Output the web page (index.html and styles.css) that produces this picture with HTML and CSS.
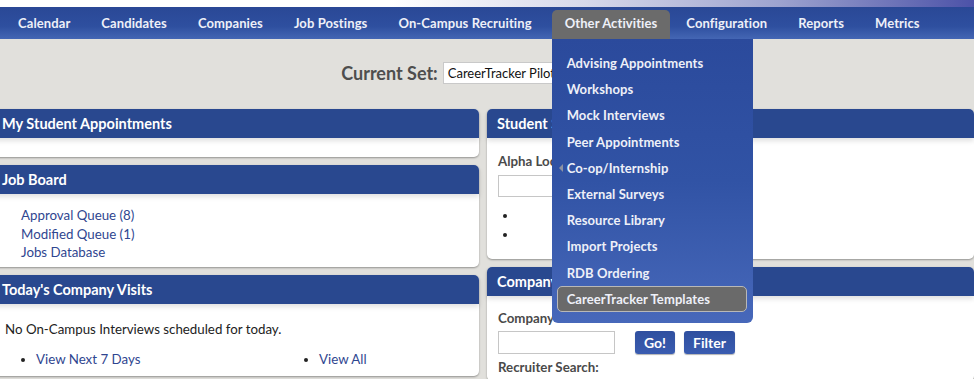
FILE: index.html
```html
<!DOCTYPE html>
<html>
<head>
<meta charset="utf-8">
<link rel="stylesheet" href="styles.css">
</head>
<body>
<div class="topstrip"></div>
<nav class="nav">
  <ul class="menu">
    <li class="menu-item">Calendar</li>
    <li class="menu-item">Candidates</li>
    <li class="menu-item">Companies</li>
    <li class="menu-item">Job Postings</li>
    <li class="menu-item">On-Campus Recruiting</li>
    <li class="menu-item active">Other Activities
      <ul class="dropdown">
        <li class="dd-item">Advising Appointments</li>
        <li class="dd-item">Workshops</li>
        <li class="dd-item">Mock Interviews</li>
        <li class="dd-item">Peer Appointments</li>
        <li class="dd-item has-sub"><span class="sub-arrow"></span>Co-op/Internship</li>
        <li class="dd-item">External Surveys</li>
        <li class="dd-item">Resource Library</li>
        <li class="dd-item">Import Projects</li>
        <li class="dd-item">RDB Ordering</li>
        <li class="dd-item hover">CareerTracker Templates</li>
      </ul>
    </li>
    <li class="menu-item">Configuration</li>
    <li class="menu-item">Reports</li>
    <li class="menu-item">Metrics</li>
  </ul>
</nav>
<main class="main">
  <div class="current-set">
    <span class="cs-label">Current Set:</span>
    <span class="cs-select">CareerTracker Pilot</span>
  </div>
  <div class="columns">
    <div class="col">
      <section class="panel">
        <h2 class="panel-head">My Student Appointments</h2>
        <div class="panel-body empty"></div>
      </section>
      <section class="panel">
        <h2 class="panel-head">Job Board</h2>
        <div class="panel-body links">
          <a class="link">Approval Queue (8)</a>
          <a class="link">Modified Queue (1)</a>
          <a class="link">Jobs Database</a>
        </div>
      </section>
      <section class="panel">
        <h2 class="panel-head">Today's Company Visits</h2>
        <div class="panel-body visits">
          <p class="note">No On-Campus Interviews scheduled for today.</p>
          <div class="two-lists">
            <ul class="blist"><li><a class="link">View Next 7 Days</a></li></ul>
            <ul class="blist"><li><a class="link">View All</a></li></ul>
          </div>
        </div>
      </section>
    </div>
    <div class="col">
      <section class="panel">
        <h2 class="panel-head">Student Search</h2>
        <div class="panel-body form">
          <div class="label">Alpha Lookup:</div>
          <div class="input wide"></div>
          <ul class="blist tight"><li>&nbsp;</li><li>&nbsp;</li></ul>
        </div>
      </section>
      <section class="panel">
        <h2 class="panel-head">Company Search</h2>
        <div class="panel-body form company">
          <div class="label">Company Name:</div>
          <div class="row">
            <div class="input"></div>
            <span class="btn go">Go!</span>
            <span class="btn">Filter</span>
          </div>
          <div class="label">Recruiter Search:</div>
        </div>
      </section>
    </div>
  </div>
</main>
</body>
</html>
```
FILE: styles.css
```css
* { box-sizing: border-box; }
html, body { margin: 0; padding: 0; }
body {
  width: 974px;
  height: 379px;
  overflow: hidden;
  background: #e1e0dc;
  font-family: Lato, "Open Sans", sans-serif;
  font-size: 13px;
  color: #222;
}
.topstrip {
  height: 7px;
  background: linear-gradient(90deg, #ffffff 0%, #ffffff 40%, #d7d9ea 60%, #9da3cf 80%, #4c52a8 100%);
}
.nav {
  height: 32px;
  background: linear-gradient(180deg, #2a4896 0%, #2e4f9f 60%, #4466b4 100%);
  position: relative;
  z-index: 5;
}
.menu {
  list-style: none;
  margin: 0;
  padding: 0 0 0 5px;
  display: flex;
  height: 32px;
}
.menu-item {
  position: relative;
  height: 29px;
  margin-top: 3px;
  margin-right: 5px;
  padding: 5px 13px 0;
  color: #eef0f8;
  font-weight: bold;
  font-size: 13px;
  letter-spacing: 0.1px;
  white-space: nowrap;
}
.menu-item.active {
  background: #6b6b6b;
  border-radius: 5px 5px 0 0;
  margin-left: 2px;
  margin-right: 3px;
}
.dropdown {
  list-style: none;
  position: absolute;
  left: 0;
  top: 29px;
  width: 201px;
  margin: 0;
  padding: 11px 0 11px;
  background: linear-gradient(180deg, #2b4a9c 0%, #3153a5 50%, #4768ba 100%);
  border-radius: 0 0 6px 6px;
}
.dd-item {
  position: relative;
  height: 26.2px;
  line-height: 24px;
  margin: 0 6px 0 5px;
  padding-left: 9px;
  border: 1px solid transparent;
  border-radius: 5px;
  font-size: 13px;
  color: #eef0f8;
}
.dd-item.hover {
  background: #6a6a6a;
  border-color: #b8b8b8;
}
.sub-arrow {
  position: absolute;
  left: 1px;
  top: 8px;
  width: 0;
  height: 0;
  border-top: 4px solid transparent;
  border-bottom: 4px solid transparent;
  border-right: 4px solid #8d92a2;
}
.main { padding-top: 22px; }
.current-set {
  display: flex;
  justify-content: center;
  align-items: center;
  gap: 5px;
  height: 24px;
  padding-left: 2px;
}
.cs-label {
  font-size: 18px;
  font-weight: bold;
  color: #4e4e4e;
}
.cs-select {
  width: 192px;
  height: 22px;
  background: #fff;
  border: 1px solid #c9c9c9;
  font-size: 13px;
  padding: 2px 4px;
  color: #111;
  white-space: nowrap;
  overflow: hidden;
}
.columns {
  margin: 24px 0 0 -8px;
  width: 982px;
  display: grid;
  grid-template-columns: 487px 487px;
  column-gap: 8px;
  align-items: start;
}
.col { display: flex; flex-direction: column; gap: 8px; }
.panel {
  background: #fff;
  border-radius: 5px;
  box-shadow: 0 1px 2px rgba(0,0,0,0.35);
}
.panel-head {
  margin: 0;
  height: 29px;
  line-height: 29px;
  padding-left: 10px;
  background: #29488f;
  border-radius: 5px 5px 0 0;
  color: #fff;
  font-size: 14.5px;
  font-weight: bold;
  box-shadow: 0 3px 5px rgba(0,0,0,0.12);
  white-space: nowrap;
}
.panel-body.empty { height: 19px; }
.link { color: #2f4690; text-decoration: none; }
.links {
  padding: 12px 0 5px 29px;
  display: flex;
  flex-direction: column;
  line-height: 18.5px;
  font-size: 13.3px;
}
.visits { padding: 17px 0 8px 13px; font-size: 13.3px; }
.note { margin: 0 0 13px; color: #222; line-height: 16px; }
.two-lists { display: grid; grid-template-columns: 283px 1fr; }
.blist { margin: 0; padding-left: 31px; line-height: 18px; }
.blist li { padding-left: 0; }
.form { padding: 15px 0 6px 11px; }
.form.company { padding-top: 14px; }
.label { font-weight: bold; color: #4a4a4a; font-size: 13.3px; line-height: 16px; }
.input {
  width: 117px;
  height: 23px;
  border: 1px solid #c6c6c6;
  background: #fff;
}
.input.wide { width: 200px; margin-top: 6px; height: 22px; }
.tight { margin: 9px 0 9px; padding-left: 20px; line-height: 19px; }
.row { display: flex; align-items: center; gap: 9px; margin: 5px 0 5px; }
.row .input { margin-right: 11px; }
.btn {
  height: 23px;
  line-height: 23px;
  padding: 0 9px;
  background: linear-gradient(180deg, #2f4f9f, #3a5cb0);
  color: #fff;
  font-weight: bold;
  font-size: 14px;
  border-radius: 3px;
  box-shadow: 0 1px 1px rgba(0,0,0,0.3);
}
.btn.go { padding: 0 9px; }
```
